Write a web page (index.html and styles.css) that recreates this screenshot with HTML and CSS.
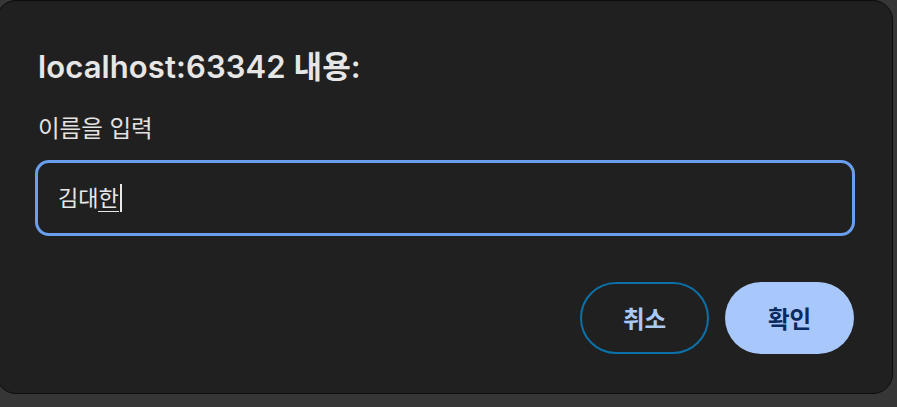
FILE: index.html
```html
<!DOCTYPE html>
<html lang="ko">
<head>
<meta charset="utf-8">
<link rel="stylesheet" href="styles.css">
</head>
<body>
<div class="dialog">
  <h1 class="title">localhost:63342 내용:</h1>
  <p class="message">이름을 입력</p>
  <div class="field"><span class="value">김대<span class="composing">한</span></span><span class="caret"></span></div>
  <div class="actions">
    <button class="btn btn-outline">취소</button>
    <button class="btn btn-filled">확인</button>
  </div>
</div>
</body>
</html>
```
FILE: styles.css
```css
html, body {
  margin: 0;
  padding: 0;
  background: #363636;
  width: 897px;
  height: 407px;
  overflow: hidden;
}
body {
  font-family: "Inter", "Noto Sans CJK KR", sans-serif;
  color: #e3e3e3;
}
.dialog {
  box-sizing: border-box;
  width: 897px;
  height: 394px;
  margin: 0 0 0 -4px;
  background: #202020;
  border: 1px solid #0c0c0c;
  border-radius: 20px;
  padding: 0 38px 0 38px;
  display: flex;
  flex-direction: column;
}
.title {
  margin: 46px 0 0 3px;
  font-size: 31px;
  font-weight: 600;
  line-height: 40px;
  color: #e6e6e6;
  letter-spacing: 0.1px;
}
.message {
  margin: 26px 0 0 3px;
  font-size: 23.5px;
  line-height: 31px;
  color: #e3e3e3;
}
.field {
  box-sizing: border-box;
  margin: 16px 0 0 0;
  width: 820px;
  height: 76px;
  border: 3px solid #6a9ff0;
  border-radius: 14px;
  display: flex;
  align-items: center;
  padding-left: 20px;
  font-size: 22px;
}
.value {
  color: #e8e8e8;
  line-height: 26px;
}
.composing {
  border-bottom: 1px solid #e8e8e8;
}
.caret {
  display: inline-block;
  width: 2px;
  height: 28px;
  background: #e8e8e8;
  margin-left: 1px;
}
.actions {
  margin-top: 46px;
  display: flex;
  justify-content: flex-end;
  gap: 16px;
}
.btn {
  box-sizing: border-box;
  width: 129px;
  height: 72px;
  border-radius: 36px;
  font-family: "Inter", "Noto Sans CJK KR", sans-serif;
  font-size: 23.5px;
  font-weight: 700;
  cursor: pointer;
}
.btn-outline {
  background: transparent;
  border: 2px solid #0b71a8;
  color: #a9c8f8;
}
.btn-filled {
  background: #a8c7fa;
  border: none;
  color: #0b2a5e;
}
```
